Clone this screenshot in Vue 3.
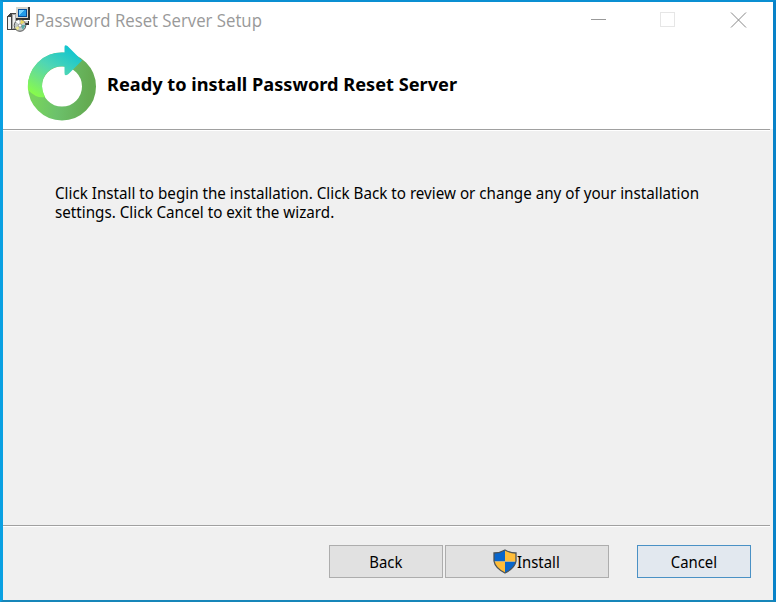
<script setup>
const bodyLines = [
  'Click Install to begin the installation. Click Back to review or change any of your installation',
  'settings. Click Cancel to exit the wizard.',
]
</script>

<template>
  <div class="window">
    <header class="titlebar">
      <svg class="app-icon" viewBox="0 0 24 25" shape-rendering="crispEdges">
        <path d="M0 9 3 6h7v17H0z" fill="#444" />
        <path d="M1 10h3v12H1z" fill="#f2f2f2" />
        <path d="M5 7h9v15H5z" fill="#aaa" />
        <path d="M6 8h2v13H6z" fill="#eee" />
        <path d="M8 14h14v4H8z" fill="#333" />
        <path d="M8 14h13v2H8z" fill="#ccc" />
        <path d="M9 0h14v13H9z" fill="#333" />
        <path d="M9 0h12v11H9z" fill="#d8d5cc" />
        <path d="M11 2h9v8h-9z" fill="#064b98" />
        <path d="M12 3h7v6h-7z" fill="#249be8" />
        <path d="M12 3h6l-6 5z" fill="#79d4ff" />
        <g shape-rendering="auto">
          <circle cx="13" cy="18.500" r="5.800" fill="#c3c9c9" stroke="#444" stroke-width=".9" />
          <path d="M13 18 8.500 14.500 12 12.800z" fill="#fff" />
          <path d="M13 18 14 12.800 18 15z" fill="#e9d664" />
          <path d="M13 18 18.500 18 16 22.700z" fill="#58aca8" />
          <path d="M13 18 11 23.600 8 21z" fill="#eee88c" />
          <circle cx="13" cy="18.500" r="1.700" fill="#fff" stroke="#777" stroke-width=".7" />
        </g>
      </svg>
      <span class="title">Password Reset Server Setup</span>
      <svg class="controls" viewBox="0 0 142 16" fill="none" shape-rendering="crispEdges">
        <path d="M0 7.500h15" stroke="#999" />
        <path d="M69.500 .5h14v14h-14z" stroke="#e6e6e6" />
        <path d="m140 .5 15 15m0-15-15 15" stroke="#888" shape-rendering="auto" />
      </svg>
    </header>
    <section class="banner">
      <svg class="logo" viewBox="0 0 70 77">
        <defs>
          <linearGradient id="ring" x1="0" y1=".5" x2="1" y2=".6">
            <stop offset="0" stop-color="#77d45d" />
            <stop offset=".45" stop-color="#6cc16b" />
            <stop offset="1" stop-color="#64ab52" />
          </linearGradient>
          <linearGradient id="arrow" gradientUnits="userSpaceOnUse" x1="42" y1="3" x2="10" y2="54">
            <stop offset="0" stop-color="#13c5cf" />
            <stop offset=".42" stop-color="#4fd6b4" />
            <stop offset=".7" stop-color="#70e482" />
            <stop offset="1" stop-color="#8bff43" />
          </linearGradient>
        </defs>
        <circle cx="35" cy="41.500" r="27" fill="none" stroke="url(#ring)" stroke-width="14" />
        <path d="M1 45A34 34 0 0 1 37.500 7.500V2q0-3 3-1L55 15.500 41.500 29q-4 3-4-1v-6.500C25 20 15 29 15 41q0 5 3 11-8 2-17-7z" fill="url(#arrow)" />
      </svg>
      <h1><span>Ready to install Password Reset Server</span></h1>
    </section>
    <main class="content">
      <p><template v-for="(line, i) in bodyLines" :key="i"><br v-if="i">{{ line }}</template></p>
    </main>
    <footer class="actions">
      <button class="back"><span>Back</span></button>
      <button class="install">
        <svg class="shield" viewBox="0 0 24 25">
          <defs>
            <clipPath id="shield-clip">
              <path d="M12 1Q7 4 1 4v8q1 7 11 12 10-5 11-12V4q-6 0-11-3z" />
            </clipPath>
          </defs>
          <g clip-path="url(#shield-clip)">
            <path d="M0 0h12v12.500H0zM12 12.500h12V25H12z" fill="#0866cc" />
            <path d="M12 0h12v12.500H12zM0 12.500h12V25H0z" fill="#ffbd38" />
          </g>
          <path d="M12 1Q7 4 1 4v8q1 7 11 12 10-5 11-12V4q-6 0-11-3z" fill="none" stroke="#4b5357" stroke-width="1.300" />
        </svg>
        <span>Install</span>
      </button>
      <button class="cancel"><span>Cancel</span></button>
    </footer>
  </div>
</template>

<style>
body { margin: 0; }
</style>

<style scoped>
.window {
  box-sizing: border-box;
  width: 776px;
  height: 602px;
  display: flex;
  flex-direction: column;
  border: solid #0a8fd2;
  border-width: 2px 3px;
  border-left-color: #0aa0e2;
  border-right-color: #0882c8;
  border-bottom-color: #1686b9;
  background: #f0f0f0;
  color: #000;
  font-family: "Noto Sans", sans-serif;
  font-size: 16px;
}
.titlebar {
  flex: none;
  height: 38px;
  display: flex;
  align-items: flex-start;
  background: #fff;
}
.app-icon { width: 24px; height: 25px; margin: 5px 0 0 4px; flex: none; }
.title {
  width: 260px;
  margin: 6px 0 0 4px;
  color: #999;
  font-family: "Open Sans", sans-serif;
  font-size: 18px;
  line-height: 25px;
  white-space: nowrap;
  transform: scaleX(.931);
  transform-origin: 0 50%;
}
.controls { width: 142px; height: 16px; margin: 10px 40px 0 auto; overflow: visible; }
.banner {
  flex: none;
  height: 89px;
  display: flex;
  align-items: flex-start;
  background: #fff;
}
.logo { width: 70px; height: 77px; margin: 5px 0 0 24px; flex: none; }
h1 {
  margin: 32px 0 0 10px;
  font-size: 18px;
  line-height: 24px;
  font-weight: 700;
  white-space: nowrap;
  transform: scaleX(1.01);
  transform-origin: 0 50%;
}
.content {
  box-sizing: border-box;
  flex: none;
  height: 396px;
  margin-right: 3px;
  padding: 54px 0 0 52px;
  border-top: 1px solid #a0a0a0;
  box-shadow: inset 0 1px #fff;
}
p {
  margin: 0;
  line-height: 19px;
  white-space: nowrap;
  transform: scaleX(.949);
  transform-origin: 0 50%;
}
.actions {
  flex: 1;
  display: flex;
  align-items: flex-start;
  justify-content: flex-end;
  gap: 2px;
  margin-right: 3px;
  padding: 19px 19px 0 0;
  border-top: 1px solid #a0a0a0;
  box-shadow: inset 0 1px #fff;
}
button {
  box-sizing: border-box;
  width: 114px;
  height: 33px;
  display: flex;
  align-items: center;
  justify-content: center;
  padding: 0;
  border: 1px solid #adadad;
  background: #e1e1e1;
  color: #000;
  font: 16px "Noto Sans", sans-serif;
}
button span { transform: scaleX(.93); }
.install { width: 164px; }
.install span { transform-origin: 0 50%; }
.shield { width: 24px; height: 25px; margin-left: 2px; }
.cancel { margin-left: 26px; border-color: #4a91c5; background: #e2e8ef; }
</style>
